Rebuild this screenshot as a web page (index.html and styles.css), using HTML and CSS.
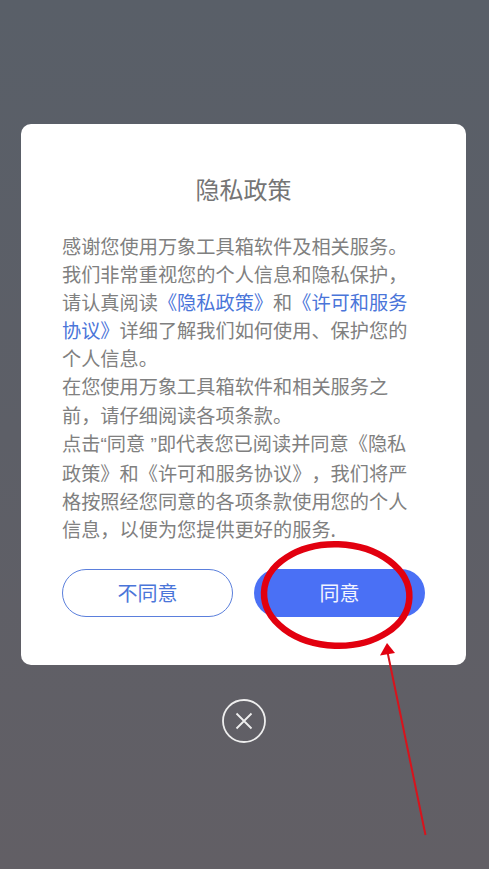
FILE: index.html
```html
<!DOCTYPE html>
<html lang="zh-CN">
<head>
<meta charset="utf-8">
<title>隐私政策</title>
<link rel="stylesheet" href="styles.css">
</head>
<body>
<main class="screen">
  <section class="dialog">
    <h1 class="title">隐私政策</h1>
    <div class="body-text">
      <p>感谢您使用万象工具箱软件及相关服务。<br>我们非常重视您的个人信息和隐私保护，<br>请认真阅读<a class="link">《隐私政策》</a>和<a class="link">《许可和服务<br>协议》</a>详细了解我们如何使用、保护您的<br>个人信息。</p>
      <p>在您使用万象工具箱软件和相关服务之<br>前，请仔细阅读各项条款。</p>
      <p>点击<span class="latin">“</span>同意<span class="latin"> ”</span>即代表您已阅读并同意《隐私<br>政策》和《许可和服务协议》，我们将严<br>格按照经您同意的各项条款使用您的个人<br>信息，以便为您提供更好的服务.</p>
    </div>
    <div class="actions">
      <button class="btn btn-outline">不同意</button>
      <button class="btn btn-solid">同意</button>
    </div>
  </section>
  <button class="close" aria-label="关闭">
    <svg viewBox="0 0 44 44" width="44" height="44"><circle cx="22" cy="22" r="21" fill="none" stroke="#eeeeee" stroke-width="1.8"/><path d="M14.500 14.500 L29.500 29.500 M29.500 14.500 L14.500 29.500" fill="none" stroke="#eeeeee" stroke-width="1.8"/></svg>
  </button>
  <svg class="markup" viewBox="0 0 489 869" width="489" height="869">
    <ellipse cx="336.700" cy="595" rx="72.700" ry="50.700" fill="none" stroke="#e2000f" stroke-width="6.500" transform="rotate(2 336.700 595)"/>
    <path d="M425.500 835 L387.500 652" fill="none" stroke="#d8131c" stroke-width="2"/>
    <path d="M387 643 L380 655.500 L395 653 Z" fill="#e2000f"/>
  </svg>
</main>
</body>
</html>
```
FILE: styles.css
```css
* { box-sizing: border-box; }
html, body { margin: 0; padding: 0; }
body { font-family: "Noto Sans CJK SC", "Liberation Sans", sans-serif; }
.screen {
  position: relative;
  width: 489px;
  height: 869px;
  overflow: hidden;
  padding-top: 124px;
  padding-right: 2px;
  display: flex;
  flex-direction: column;
  align-items: center;
  background: linear-gradient(180deg, #595f68 0%, #5d5f67 50%, #625f65 100%);
}
.dialog {
  width: 445px;
  height: 541px;
  background: #fff;
  border-radius: 10px;
  padding: 48px 41px 0;
}
.title {
  margin: 0;
  font-size: 24px;
  line-height: 34px;
  font-weight: 400;
  color: #757575;
  text-align: center;
}
.body-text {
  margin-top: 26px;
  font-size: 19.2px;
  line-height: 28.1px;
  color: #808080;
  white-space: nowrap;
  text-spacing-trim: space-all;
  font-feature-settings: "chws" 0, "palt" 0;
}
.body-text p { margin: 0; }
.latin { font-family: "Liberation Sans", sans-serif; }
.link { color: #4a75d9; }
.actions {
  display: flex;
  gap: 21px;
  margin-top: 26px;
}
.btn {
  width: 171px;
  height: 48px;
  border-radius: 24px;
  font: inherit;
  font-size: 20px;
  padding: 0 0 2px;
}
.btn-outline {
  background: #fff;
  border: 1.5px solid #5b7fdc;
  color: #4a75d9;
}
.btn-solid {
  background: #4a70f5;
  border: 0;
  color: #f2f4ff;
}
.close {
  width: 44px;
  height: 44px;
  margin-top: 34px;
  padding: 0;
  border: 0;
  background: none;
  display: block;
}
.close svg { display: block; }
.markup {
  position: absolute;
  left: 0;
  top: 0;
  pointer-events: none;
}
```
